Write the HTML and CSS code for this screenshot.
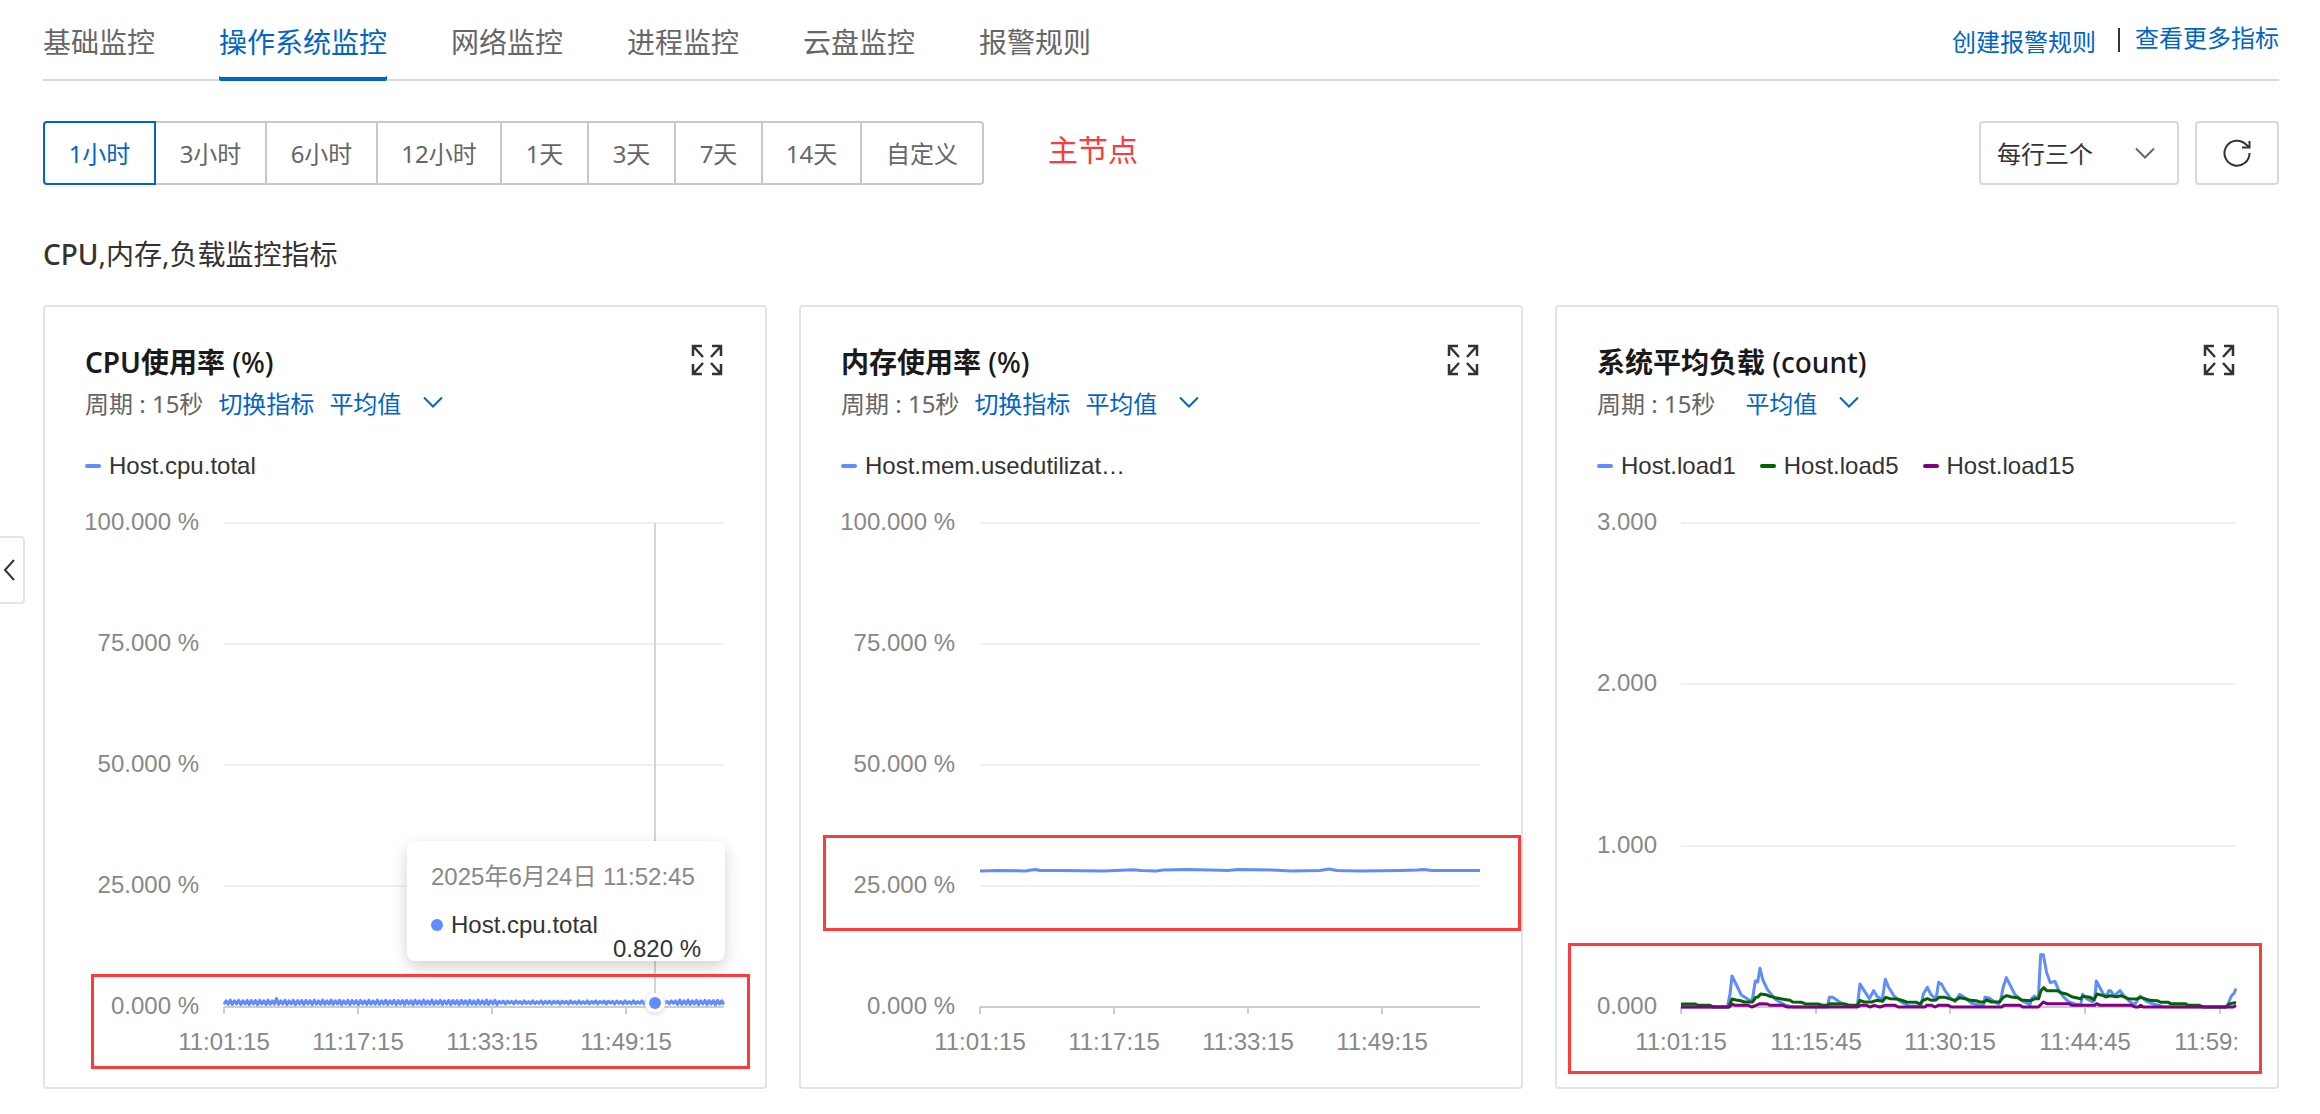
FILE: index.html
```html
<!DOCTYPE html>
<html lang="zh-CN">
<head>
<meta charset="utf-8">
<title>操作系统监控</title>
<link rel="stylesheet" href="styles.css">
</head>
<body>
<svg class="defs" aria-hidden="true">
  <symbol id="expand" viewBox="0 0 36 36"><path d="M4 12V2H13M4 2L14 13M23 2H32V12M32 2L22 13M4 20V30H13M4 30L14 19M23 30H32V20M32 30L22 19"/></symbol>
  <symbol id="chevron" viewBox="0 0 20 12"><path d="M1 1.500L10 10.500L19 1.500"/></symbol>
</svg>
<button class="collapse" type="button" aria-label="展开侧栏"><svg viewBox="0 0 12 22"><path d="M11 1L2 11L11 21"/></svg></button>
<main class="page">
  <header class="topbar">
    <nav class="tabs">
      <a class="tab" href="#">基础监控</a>
      <a class="tab tab-active" href="#">操作系统监控</a>
      <a class="tab" href="#">网络监控</a>
      <a class="tab" href="#">进程监控</a>
      <a class="tab" href="#">云盘监控</a>
      <a class="tab" href="#">报警规则</a>
    </nav>
    <div class="links">
      <a class="link" href="#">创建报警规则</a>
      <span class="divider"></span>
      <a class="link link-raised" href="#">查看更多指标</a>
    </div>
  </header>

  <div class="toolbar">
    <div class="ranges">
      <button class="range range-hour range-active" type="button">1小时</button>
      <button class="range range-hour" type="button">3小时</button>
      <button class="range range-hour" type="button">6小时</button>
      <button class="range range-hours" type="button">12小时</button>
      <button class="range range-day" type="button">1天</button>
      <button class="range range-day" type="button">3天</button>
      <button class="range range-day" type="button">7天</button>
      <button class="range range-days" type="button">14天</button>
      <button class="range range-custom" type="button">自定义</button>
    </div>
    <p class="note">主节点</p>
    <div class="actions">
      <div class="columns">
        <select class="columns-select" aria-label="每行图表数"><option>每行三个</option></select>
        <svg class="chevron"><use href="#chevron"/></svg>
      </div>
      <button class="refresh" type="button" aria-label="刷新"><svg viewBox="0 0 28 28"><path d="M26.500 14A12.500 12.500 0 1 1 23 5.500L26 8"/><path d="M26.500 2V8.500H19"/></svg></button>
    </div>
  </div>

  <h1 class="heading"><span class="heading-strong">CPU</span>,内存,负载监控指标</h1>

  <section class="cards">
    <article class="card">
      <div class="card-head"><h2 class="title">CPU使用率 <span class="unit">(%)</span></h2><button class="expand" type="button" aria-label="放大"><svg><use href="#expand"/></svg></button></div>
      <div class="meta">
        <span>周期 : 15秒</span>
        <a class="link" href="#">切换指标</a>
        <div class="stat"><select class="stat-select" aria-label="统计方式"><option>平均值</option></select><svg class="chevron"><use href="#chevron"/></svg></div>
      </div>
      <ul class="legend"><li class="series series-blue">Host.cpu.total</li></ul>
      <div class="chart">
        <svg class="plot" viewBox="0 0 640 558" role="img" aria-label="CPU使用率">
          <g class="grid"><path d="M139 18H639M139 139H639M139 260H639M139 381H639"/></g>
          <g class="axis"><path d="M139 502H639M139 502V509M273 502V509M407 502V509M541 502V509"/></g>
          <g class="ylabels"><text x="114" y="25">100.000 %</text><text x="114" y="146">75.000 %</text><text x="114" y="267">50.000 %</text><text x="114" y="388">25.000 %</text><text x="114" y="509">0.000 %</text></g>
          <g class="xlabels"><text x="139" y="545">11:01:15</text><text x="273" y="545">11:17:15</text><text x="407" y="545">11:33:15</text><text x="541" y="545">11:49:15</text></g>
          <path class="crosshair" d="M570 18V498"/>
          <polyline id="cpu" class="line blue"/>
          <circle class="marker-ring" cx="570" cy="498" r="10"/><circle class="marker" cx="570" cy="498" r="6"/>
        </svg>
        <div class="tooltip">
          <p class="tooltip-time">2025年6月24日 11:52:45</p>
          <p class="tooltip-name">Host.cpu.total</p>
          <p class="tooltip-value">0.820 %</p>
        </div>
        <div class="mark mark-cpu"></div>
      </div>
    </article>

    <article class="card">
      <div class="card-head"><h2 class="title">内存使用率 <span class="unit">(%)</span></h2><button class="expand" type="button" aria-label="放大"><svg><use href="#expand"/></svg></button></div>
      <div class="meta">
        <span>周期 : 15秒</span>
        <a class="link" href="#">切换指标</a>
        <div class="stat"><select class="stat-select" aria-label="统计方式"><option>平均值</option></select><svg class="chevron"><use href="#chevron"/></svg></div>
      </div>
      <ul class="legend"><li class="series series-blue">Host.mem.usedutilizat…</li></ul>
      <div class="chart">
        <svg class="plot" viewBox="0 0 640 558" role="img" aria-label="内存使用率">
          <g class="grid"><path d="M139 18H639M139 139H639M139 260H639M139 381H639"/></g>
          <g class="axis"><path d="M139 502H639M139 502V509M273 502V509M407 502V509M541 502V509"/></g>
          <g class="ylabels"><text x="114" y="25">100.000 %</text><text x="114" y="146">75.000 %</text><text x="114" y="267">50.000 %</text><text x="114" y="388">25.000 %</text><text x="114" y="509">0.000 %</text></g>
          <g class="xlabels"><text x="139" y="545">11:01:15</text><text x="273" y="545">11:17:15</text><text x="407" y="545">11:33:15</text><text x="541" y="545">11:49:15</text></g>
          <polyline class="line blue" points="139,366 158,365.500 185,366 190,365 195,364.500 199,365.500 220,365.500 262,366 275,365.500 292,364.800 300,365.500 315,366 322,365 347,364.500 369,365 387,365.500 397,364.500 431,365 451,366 479,365.500 488,364 496,365.500 519,366 560,365.500 576,365 583,364.500 591,365.500 639,365.500"/>
        </svg>
        <div class="mark mark-mem"></div>
      </div>
    </article>

    <article class="card">
      <div class="card-head"><h2 class="title">系统平均负载 <span class="unit">(count)</span></h2><button class="expand" type="button" aria-label="放大"><svg><use href="#expand"/></svg></button></div>
      <div class="meta">
        <span>周期 : 15秒</span>
        <span></span>
        <div class="stat"><select class="stat-select" aria-label="统计方式"><option>平均值</option></select><svg class="chevron"><use href="#chevron"/></svg></div>
      </div>
      <ul class="legend"><li class="series series-blue">Host.load1</li><li class="series series-green">Host.load5</li><li class="series series-purple">Host.load15</li></ul>
      <div class="chart">
        <svg class="plot" viewBox="0 0 640 558" role="img" aria-label="系统平均负载">
          <g class="grid"><path d="M84 18H639M84 179H639M84 341H639"/></g>
          <g class="axis"><path d="M84 502H639M84 502V509M219 502V509M353 502V509M488 502V509M623 502V509"/></g>
          <g class="ylabels"><text x="60" y="25">3.000</text><text x="60" y="186">2.000</text><text x="60" y="348">1.000</text><text x="60" y="509">0.000</text></g>
          <g class="xlabels"><text x="84" y="545">11:01:15</text><text x="219" y="545">11:15:45</text><text x="353" y="545">11:30:15</text><text x="488" y="545">11:44:45</text><text x="623" y="545">11:59:15</text></g>
          <g class="loads" transform="translate(-57 415) scale(.33333)">
            <polyline class="line blue" points="423,261 562,261 570,222 576,168 604,225 636,245 646,183 653,186 660,145 668,178 682,208 706,238 736,256 760,261 862,261 868,232 878,232 900,247 925,258 952,258 960,192 988,236 1001,212 1012,230 1027,238 1036,178 1045,200 1062,228 1085,247 1110,258 1143,258 1150,222 1162,202 1172,222 1188,238 1196,187 1205,193 1215,212 1232,235 1245,245 1259,223 1270,230 1295,250 1330,258 1335,232 1347,234 1362,244 1376,252 1382,240 1390,200 1399,173 1424,222 1445,242 1470,254 1475,236 1483,228 1495,236 1502,104 1510,104 1520,158 1531,188 1545,184 1555,208 1570,230 1585,245 1610,253 1622,255 1628,223 1640,236 1658,246 1664,240 1669,183 1690,222 1700,228 1706,212 1712,212 1722,228 1740,212 1752,228 1772,247 1785,253 1800,228 1820,244 1840,252 1870,260 2060,261 2074,228 2082,220 2088,206"/>
            <polyline class="line green" points="423,252 466,252 474,256 510,256 520,261 566,261 576,237 588,240 602,242 612,246 638,246 647,232 654,231 662,222 678,224 690,229 706,233 730,238 750,241 758,246 785,247 795,251 835,252 848,256 862,256 870,251 915,252 930,256 952,256 960,241 972,246 995,246 1010,241 1028,244 1037,232 1050,236 1070,237 1082,240 1100,246 1130,247 1140,252 1148,242 1162,236 1175,241 1188,240 1197,232 1215,232 1245,241 1259,233 1280,237 1290,241 1308,242 1320,246 1332,246 1340,240 1355,246 1378,246 1390,232 1400,227 1415,231 1432,233 1445,240 1472,242 1485,236 1496,236 1503,212 1511,203 1520,212 1552,212 1565,219 1580,222 1595,230 1622,236 1628,229 1650,232 1662,239 1671,222 1690,227 1698,231 1710,227 1730,230 1743,227 1765,236 1790,237 1802,232 1830,241 1852,242 1862,247 1885,247 1892,251 1935,251 1945,256 1978,256 1990,261 2058,261 2068,252 2088,247"/>
            <polyline class="line purple" points="423,261 568,261 577,252 585,256 625,256 635,261 648,256 660,251 682,252 690,256 730,256 740,261 952,261 962,256 980,256 990,261 1003,256 1020,261 1035,256 1065,256 1075,261 1155,261 1160,256 1175,256 1185,261 1195,256 1225,256 1235,261 1385,261 1392,256 1440,256 1448,261 1495,261 1510,246 1520,251 1588,251 1595,256 1664,256 1670,251 1680,256 1775,256 1785,261 1795,261 1802,256 1810,261 2080,261 2088,256"/>
          </g>
        </svg>
        <div class="mark mark-load"></div>
      </div>
    </article>
  </section>
</main>
<script src="chart.js"></script>
</body>
</html>
```
FILE: styles.css
```css
* { box-sizing: border-box; margin: 0; padding: 0; }
body { background: #fff; color: #333; font: 24px/32px "Noto Sans", "Noto Sans CJK SC", sans-serif; }
a { text-decoration: none; }
ul { list-style: none; }
button, select { font: inherit; color: inherit; background: none; border: 0; }
button { cursor: pointer; }
svg { display: block; fill: none; stroke: currentColor; }
.defs { display: none; }
.page { padding: 4px 41px 25px 43px; }

.collapse { position: fixed; left: 0; top: 536px; width: 25px; height: 68px; padding-left: 3px; background: #fff; border: 2px solid #e3e4e6; border-left: 0; border-radius: 0 4px 4px 0; }
.collapse svg { width: 12px; height: 22px; stroke-width: 2; }

.topbar { display: flex; justify-content: space-between; height: 77px; border-bottom: 2px solid #d9d9d9; }
.tabs { display: flex; gap: 64px; margin-bottom: -2px; }
.tab { display: flex; align-items: center; padding-bottom: 2px; font-size: 28px; color: #666; }
.tab-active { color: #0064c8; border-radius: 2px; box-shadow: inset 0 -4px #0064c8; }
.links { display: flex; align-items: center; }
.link { color: #0064c8; }
.link-raised { padding-bottom: 8px; }
.divider { width: 2px; height: 24px; margin: 0 15px 4px 22px; background: #333; }

.toolbar { display: flex; align-items: center; margin-top: 40px; }
.ranges { display: flex; }
.range { height: 64px; padding-top: 2px; border: 2px solid #c8c8c8; color: #666; }
.range + .range { margin-left: -2px; }
.range:first-child { border-radius: 4px 0 0 4px; }
.range:last-child { border-radius: 0 4px 4px 0; }
.range-hour { width: 113px; }
.range-hours { width: 126px; }
.range-day { width: 89px; }
.range-days { width: 101px; }
.range-custom { width: 124px; }
.range-active { position: relative; color: #0064c8; border-color: #0064c8; }
.note { margin: 0 auto 6px 64px; font-size: 30px; color: #ff3a3a; }
.actions { display: flex; gap: 16px; }
.columns { position: relative; }
.columns-select { width: 200px; height: 64px; padding: 2px 16px 0; border: 2px solid #d9d9d9; border-radius: 4px; appearance: none; }
.chevron { position: absolute; right: 0; top: 8px; width: 20px; height: 12px; stroke-width: 2; pointer-events: none; }
.columns .chevron { right: 24px; top: 26px; color: #666; }
.refresh { display: grid; place-items: center; width: 84px; height: 64px; border: 2px solid #d9d9d9; border-radius: 4px; }
.refresh svg { width: 28px; height: 28px; stroke-width: 2; }

.heading { margin: 49px 0 31px; font-size: 28px; line-height: 40px; font-weight: 400; }
.heading-strong { font-weight: 500; }
.cards { display: grid; grid-template-columns: repeat(3, minmax(0, 1fr)); gap: 32px; }
.card { padding: 35px 40px 24px; border: 2px solid #e3e4e6; border-radius: 4px; }
.card-head { display: flex; justify-content: space-between; align-items: center; }
.title { font-size: 28px; line-height: 40px; font-weight: 600; color: #1a1a1a; }
.unit { font-weight: 500; }
.expand svg { width: 36px; height: 36px; stroke-width: 2.5; }
.meta { display: flex; gap: 15px; margin-top: 6px; color: #666; }
.stat { position: relative; width: 114px; color: #0064c8; }
.stat-select { width: 100%; height: 32px; appearance: none; }
.legend { display: flex; gap: 24px; margin: 30px 0 23px; font-family: "Liberation Sans", sans-serif; }
.series { display: flex; align-items: center; gap: 8px; }
.series::before { content: ""; width: 16px; height: 4px; border-radius: 2px; background: #608cff; }
.series-green::before { background: #006400; }
.series-purple::before { background: #800080; }

.chart { position: relative; font-family: "Liberation Sans", "Noto Sans CJK SC", sans-serif; }
.plot { width: 100%; overflow: hidden; }
.plot text { fill: #888; stroke: none; }
.ylabels { text-anchor: end; }
.xlabels { text-anchor: middle; }
.grid { stroke: #f0f0f0; stroke-width: 2; }
.axis { stroke: #ccc; stroke-width: 2; }
.crosshair { stroke: #d4d4d4; stroke-width: 2; }
.line { stroke-width: 3; stroke-linejoin: round; }
.loads .line { stroke-width: 9; }
.blue { stroke: #608cff; }
.green { stroke: #006400; }
.purple { stroke: #800080; }
.marker-ring { fill: #fff; stroke: none; filter: drop-shadow(0 1px 2px #ccc); }
.marker { fill: #608cff; stroke: none; }
.tooltip { position: absolute; right: 0; top: 336px; width: 318px; height: 120px; padding: 20px 24px; background: #fff; border-radius: 8px; box-shadow: 0 6px 16px rgba(0, 0, 0, .18); color: #333; }
.tooltip-time { color: #888; white-space: nowrap; }
.tooltip-name { display: flex; align-items: center; gap: 8px; margin-top: 17px; line-height: 30px; }
.tooltip-name::before { content: ""; width: 12px; height: 12px; border-radius: 50%; background: #608cff; }
.tooltip-value { text-align: right; line-height: 18px; }
.mark { position: absolute; border: 3px solid #ff3a3a; pointer-events: none; }
.mark-cpu { left: 6px; right: -25px; top: 469px; height: 95px; }
.mark-mem { left: -18px; right: -40px; top: 330px; height: 96px; }
.mark-load { left: -29px; right: -25px; top: 438px; height: 131px; }
```
FILE: chart.js
```js
// CPU samples every 15 s; usage alternates between two close levels
const points = [];
for (let i = 0; i <= 238; i++) {
  const x = 139 + i * 2.1;
  const swing = i > 130 && i < 215 ? 1.2 : 1.9;
  const wobble = Math.sin(i * 1.7) * 0.4;
  const spike = i === 25 ? 1.5 : 0;
  points.push(`${x.toFixed(1)},${(497.4 + (i % 2 ? -swing : swing) + wobble - spike).toFixed(1)}`);
}
document.getElementById("cpu").setAttribute("points", points.join(" "));
```
